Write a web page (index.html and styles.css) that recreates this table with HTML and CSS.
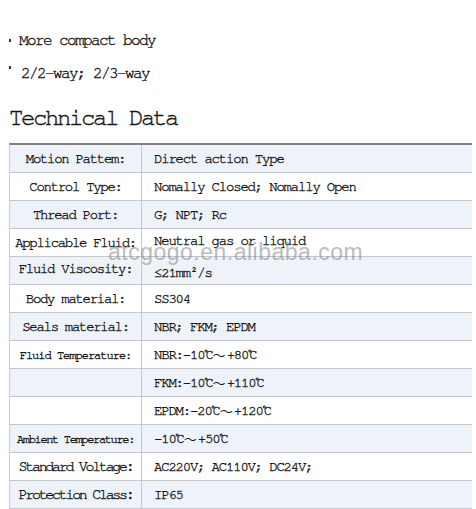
FILE: index.html
```html
<!DOCTYPE html>
<html>
<head>
<meta charset="utf-8">
<link rel="stylesheet" href="styles.css">
</head>
<body>
<div class="page">
  <ul class="features">
    <li class="feat feat-1"><span class="dot"></span><span>More compact body</span></li>
    <li class="feat feat-2"><span class="dot"></span><span>2/2-way; 2/3-way</span></li>
  </ul>
  <h2 class="heading">Technical Data</h2>
  <div class="table">
    <div class="row alt"><div class="lbl">Motion Pattem:</div><div class="val">Direct action Type</div></div>
    <div class="row"><div class="lbl">Control Type:</div><div class="val">Nomally Closed; Nomally Open</div></div>
    <div class="row alt"><div class="lbl">Thread Port:</div><div class="val">G; NPT; Rc</div></div>
    <div class="row"><div class="lbl">Applicable Fluid:</div><div class="val up">Neutral gas or liquid</div></div>
    <div class="row alt"><div class="lbl up">Fluid Viscosity:</div><div class="val down">≤21mm²/s</div></div>
    <div class="row"><div class="lbl">Body material:</div><div class="val">SS304</div></div>
    <div class="row alt"><div class="lbl">Seals material:</div><div class="val">NBR; FKM; EPDM</div></div>
    <div class="row"><div class="lbl small">Fluid Temperature:</div><div class="val">NBR:-10℃<span class="tilde">～</span>+80℃</div></div>
    <div class="row alt"><div class="lbl"></div><div class="val">FKM:-10℃<span class="tilde">～</span>+110℃</div></div>
    <div class="row"><div class="lbl"></div><div class="val">EPDM:-20℃<span class="tilde">～</span>+120℃</div></div>
    <div class="row alt"><div class="lbl tiny">Ambient Temperature:</div><div class="val">-10℃<span class="tilde">～</span>+50℃</div></div>
    <div class="row"><div class="lbl big">Standard Voltage:</div><div class="val">AC220V; AC110V; DC24V;</div></div>
    <div class="row alt"><div class="lbl big">Protection Class:</div><div class="val">IP65</div></div>
  </div>
  <div class="watermark">atcgogo.en.alibaba.com</div>
</div>
</body>
</html>
```

FILE: styles.css
```css
* { box-sizing: border-box; }
html, body { margin: 0; padding: 0; background: #ffffff; }
body {
  font-family: "FreeMono", "Nimbus Mono PS", "Nimbus Mono L", "Courier New", "Liberation Mono", "Noto Sans CJK SC", monospace;
  color: #161616;
  overflow: hidden;
}
.page {
  position: relative;
  padding: 24px 0 0 9px;
}
.features {
  list-style: none;
  margin: 0;
  padding: 0;
}
.feat {
  display: flex;
  align-items: flex-start;
  height: 32px;
  font-size: 16px;
  letter-spacing: -1.6px;
  line-height: 32px;
  -webkit-text-stroke: 0.35px #161616;
}
.dot {
  width: 2px;
  height: 3px;
  background: #333;
  flex: none;
}
.feat-1 .dot { margin-top: 15px; margin-right: 8px; }
.feat-2 .dot { margin-top: 10px; margin-right: 10px; }
.feat-2 span:last-child { line-height: 30px; padding-top: 2px; }
.heading {
  margin: 14px 0 0 0;
  font-weight: normal;
  font-size: 24px;
  letter-spacing: -2.4px;
  line-height: 32px;
  height: 32px;
  -webkit-text-stroke: 0.4px #161616;
}
.table {
  margin-top: 9px;
  width: 463px;
  border-top: 2px solid #808080;
  border-left: 1px solid #c9ccd0;
}
.row {
  display: grid;
  grid-template-columns: 132px 1fr;
  height: 28px;
  border-bottom: 1px solid #c4c8cc;
  background: #ffffff;
}
.row.alt { background: #eef3fa; }
.lbl, .val {
  display: flex;
  align-items: center;
  font-size: 14px;
  letter-spacing: -1.3px;
  white-space: nowrap;
  -webkit-text-stroke: 0.35px #161616;
}
.lbl {
  justify-content: center;
  border-right: 1px solid #c4c8cc;
}
.val {
  padding-left: 12px;
  letter-spacing: -1.2px;
}
.tilde {
  font-family: "Noto Sans CJK SC", sans-serif;
  font-size: 13px;
  letter-spacing: 0;
  -webkit-text-stroke: 0;
  margin: 0 1px;
}
.lbl.small { font-size: 12px; letter-spacing: -1px; }
.lbl.tiny { font-size: 12px; letter-spacing: -1.35px; }
.lbl.big { font-size: 15px; letter-spacing: -2.3px; }
.up { padding-bottom: 3px; }
.down { padding-top: 4px; }
.watermark {
  position: absolute;
  left: 108px;
  top: 239px;
  font-family: "Liberation Sans", Arial, sans-serif;
  font-size: 23px;
  letter-spacing: 0.5px;
  color: rgba(120, 120, 120, 0.5);
  pointer-events: none;
}
```
